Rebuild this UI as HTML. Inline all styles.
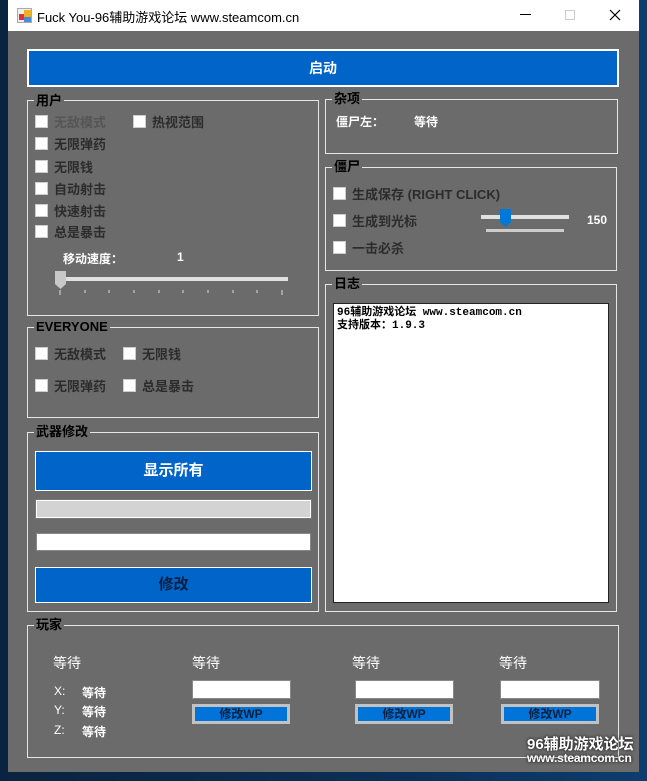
<!DOCTYPE html>
<html><head><meta charset="utf-8"><style>
*{margin:0;padding:0;box-sizing:border-box}
body{width:647px;height:781px;overflow:hidden;background:linear-gradient(90deg,#0a2340,#0b2f55 60%,#0d3d6e);position:relative;font-family:"Liberation Sans","Noto Sans CJK SC",sans-serif;font-size:13px}
.a{position:absolute}
.win{left:8px;top:0;width:631px;height:772px;background:#6b6b6b}
.title{left:8px;top:0;width:631px;height:31px;background:#fff}
.g{position:absolute;border:1px solid #e6e6e6}
.lg{position:absolute;background:#6b6b6b;color:#000;font-weight:bold;font-size:13px;padding:0 2px;line-height:14px}
.cb{position:absolute;width:13px;height:13px;background:#fff;border:1px solid #ccc}
.lb{position:absolute;font-weight:bold;font-size:13px;color:#2c2c2c;line-height:15px;white-space:nowrap}
.wt{position:absolute;color:#fff;font-weight:bold;white-space:nowrap}
.btn{position:absolute;background:#0064c8;border:1px solid #fff;color:#fff;font-weight:bold;text-align:center}
.wp{position:absolute;width:98px;height:20px;border:3px solid #c2c2c2;background:#0074d8;color:#08203f;font-weight:bold;font-size:12px;text-align:center;line-height:14px}
.tb{position:absolute;background:#fff;border:1px solid #888}
</style></head><body>
<div class="a win"></div>
<div class="a title"></div>
<div class="a" style="left:17px;top:8px;width:15px;height:15px;border:1px solid #aaa;background:#eee"><div class="a" style="left:1px;top:5px;width:5px;height:6px;background:#d33"></div><div class="a" style="left:6px;top:1px;width:7px;height:7px;background:#f0b020"></div><div class="a" style="left:6px;top:8px;width:7px;height:5px;background:#4a8ad8"></div></div>
<div class="a" style="left:37px;top:7px;font-size:13px;color:#000">Fuck You-96辅助游戏论坛 www.steamcom.cn</div>
<div class="a" style="left:520px;top:14px;width:11px;height:1px;background:#000"></div>
<div class="a" style="left:565px;top:10px;width:10px;height:10px;border:1px solid #ccc"></div>
<svg class="a" style="left:609px;top:9px" width="12" height="12"><path d="M1 1L11 11M11 1L1 11" stroke="#000" stroke-width="1.2"/></svg>

<div class="btn" style="left:27px;top:49px;width:592px;height:38px;border-width:2px;font-size:14px;line-height:34px">启动</div>

<div class="g" style="left:27px;top:100px;width:292px;height:216px"></div>
<div class="lg" style="left:34px;top:94px">用户</div>
<div class="cb" style="left:35px;top:115px"></div><div class="lb" style="left:54px;top:115px;color:#555">无敌模式</div>
<div class="cb" style="left:133px;top:115px"></div><div class="lb" style="left:152px;top:115px">热视范围</div>
<div class="cb" style="left:35px;top:137px"></div><div class="lb" style="left:54px;top:137px">无限弹药</div>
<div class="cb" style="left:35px;top:160px"></div><div class="lb" style="left:54px;top:160px">无限钱</div>
<div class="cb" style="left:35px;top:182px"></div><div class="lb" style="left:54px;top:182px">自动射击</div>
<div class="cb" style="left:35px;top:204px"></div><div class="lb" style="left:54px;top:204px">快速射击</div>
<div class="cb" style="left:35px;top:225px"></div><div class="lb" style="left:54px;top:225px">总是暴击</div>
<div class="wt" style="left:63px;top:250px;font-size:12px">移动速度：</div>
<div class="wt" style="left:177px;top:250px;font-size:12px">1</div>
<div class="a" style="left:56px;top:277px;width:232px;height:4px;background:#e0e0e0"></div>
<svg class="a" style="left:55px;top:271px" width="12" height="19"><path d="M0 0H11V13L5.5 18L0 13Z" fill="#c8c8c8"/></svg>
<svg class="a" style="left:58px;top:290px" width="230" height="6"><g stroke="#ddd"><path d="M2 0v5M27 0v3M51 0v3M76 0v3M101 0v3M125 0v3M150 0v3M175 0v3M199 0v3M224 0v5"/></g></svg>

<div class="g" style="left:27px;top:327px;width:292px;height:91px"></div>
<div class="lg" style="left:34px;top:320px">EVERYONE</div>
<div class="cb" style="left:35px;top:347px"></div><div class="lb" style="left:54px;top:347px">无敌模式</div>
<div class="cb" style="left:123px;top:347px"></div><div class="lb" style="left:142px;top:347px">无限钱</div>
<div class="cb" style="left:35px;top:379px"></div><div class="lb" style="left:54px;top:379px">无限弹药</div>
<div class="cb" style="left:123px;top:379px"></div><div class="lb" style="left:142px;top:379px">总是暴击</div>

<div class="g" style="left:27px;top:432px;width:292px;height:180px"></div>
<div class="lg" style="left:34px;top:425px">武器修改</div>
<div class="btn" style="left:35px;top:451px;width:277px;height:40px;font-size:15px;line-height:38px">显示所有</div>
<div class="a" style="left:36px;top:500px;width:275px;height:18px;background:#d3d3d3;border:1px solid #fff;outline:1px solid #777"></div>
<div class="a" style="left:36px;top:533px;width:275px;height:18px;background:#fff;border:1px solid #888"></div>
<div class="btn" style="left:35px;top:567px;width:277px;height:36px;font-size:15px;line-height:34px;color:#08203f">修改</div>

<div class="g" style="left:325px;top:99px;width:293px;height:55px"></div>
<div class="lg" style="left:332px;top:92px">杂项</div>
<div class="wt" style="left:336px;top:113px;font-size:12px">僵尸左：</div>
<div class="wt" style="left:414px;top:113px;font-size:12px">等待</div>

<div class="g" style="left:325px;top:167px;width:292px;height:104px"></div>
<div class="lg" style="left:332px;top:160px">僵尸</div>
<div class="cb" style="left:333px;top:187px"></div><div class="lb" style="left:352px;top:187px">生成保存 (RIGHT CLICK)</div>
<div class="cb" style="left:333px;top:214px"></div><div class="lb" style="left:352px;top:214px">生成到光标</div>
<div class="cb" style="left:333px;top:241px"></div><div class="lb" style="left:352px;top:241px">一击必杀</div>
<div class="a" style="left:481px;top:215px;width:88px;height:4px;background:#e0e0e0"></div>
<svg class="a" style="left:500px;top:209px" width="12" height="19"><path d="M0 0H11V13L5.5 18L0 13Z" fill="#0078d7"/></svg>
<div class="a" style="left:486px;top:229px;width:78px;height:3px;background:#ccc"></div>
<div class="wt" style="left:587px;top:213px;font-size:12px">150</div>

<div class="g" style="left:325px;top:284px;width:292px;height:328px"></div>
<div class="lg" style="left:332px;top:277px">日志</div>
<div class="a" style="left:333px;top:303px;width:276px;height:300px;background:#fff;border:1px solid #222;padding:3px 3px;font-size:11px;font-weight:bold;line-height:13px;color:#000;font-family:'Liberation Mono','Noto Sans CJK SC',monospace">96辅助游戏论坛 www.steamcom.cn<br>支持版本：1.9.3</div>

<div class="g" style="left:27px;top:625px;width:592px;height:133px"></div>
<div class="lg" style="left:34px;top:618px">玩家</div>
<div class="wt" style="left:53px;top:653px;font-size:14px;font-weight:normal">等待</div>
<div class="wt" style="left:192px;top:653px;font-size:14px;font-weight:normal">等待</div>
<div class="wt" style="left:352px;top:653px;font-size:14px;font-weight:normal">等待</div>
<div class="wt" style="left:499px;top:653px;font-size:14px;font-weight:normal">等待</div>
<div class="wt" style="left:54px;top:684px;font-size:12px;font-weight:normal">X:</div><div class="wt" style="left:82px;top:684px;font-size:12px">等待</div>
<div class="wt" style="left:54px;top:703px;font-size:12px;font-weight:normal">Y:</div><div class="wt" style="left:82px;top:703px;font-size:12px">等待</div>
<div class="wt" style="left:54px;top:723px;font-size:12px;font-weight:normal">Z:</div><div class="wt" style="left:82px;top:723px;font-size:12px">等待</div>
<div class="tb" style="left:192px;top:680px;width:99px;height:19px"></div>
<div class="tb" style="left:355px;top:680px;width:99px;height:19px"></div>
<div class="tb" style="left:500px;top:680px;width:100px;height:19px"></div>
<div class="wp" style="left:192px;top:704px">修改WP</div>
<div class="wp" style="left:355px;top:704px">修改WP</div>
<div class="wp" style="left:501px;top:704px">修改WP</div>

<div class="wt" style="left:527px;top:733px;font-size:15px;text-shadow:0 0 3px #000">96辅助游戏论坛</div>
<div class="wt" style="left:527px;top:751px;font-size:12px;letter-spacing:-0.2px;text-shadow:0 0 3px #000">www.steamcom.cn</div>
</body></html>
